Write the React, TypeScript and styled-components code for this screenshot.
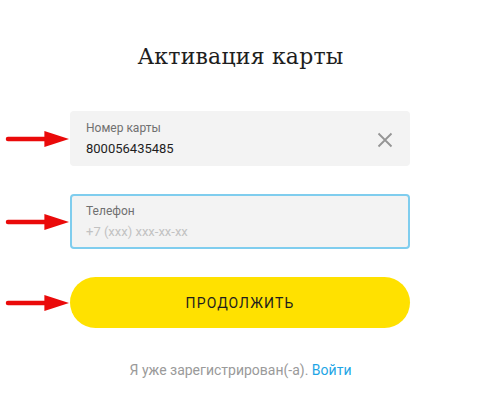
import React from "react";
import styled, { createGlobalStyle } from "styled-components";

const Global = createGlobalStyle`
  html, body { margin: 0; padding: 0; background: #ffffff; }
  body { font-family: Roboto, "Noto Sans", Arial, sans-serif; }
`;

const Page = styled.div`
  width: 481px;
  height: 417px;
  display: flex;
  flex-direction: column;
  align-items: center;
  box-sizing: border-box;
  padding-top: 42px;
`;

const Title = styled.h1`
  margin: 0;
  font-family: "DejaVu Serif", "Liberation Serif", serif;
  font-weight: 400;
  font-size: 22px;
  line-height: 30px;
  color: #1e1e1e;
  letter-spacing: 0.2px;
`;

const Row = styled.div<{ $top: number }>`
  display: grid;
  grid-template-columns: 70px 340px;
  width: 481px;
  margin-top: ${(p) => p.$top}px;
  align-items: center;
`;

const ArrowCell = styled.div`
  display: flex;
  align-items: center;
  justify-content: flex-start;
  padding-left: 5px;
  height: 100%;
`;

const Field = styled.div<{ $focused?: boolean }>`
  position: relative;
  box-sizing: border-box;
  height: 55px;
  background: #f3f3f3;
  border-radius: 4px;
  border: 2px solid ${(p) => (p.$focused ? "#7fcdee" : "transparent")};
  padding: 7px 14px 0 14px;
  display: flex;
  flex-direction: column;
`;

const Label = styled.div`
  font-size: 12px;
  line-height: 16px;
  color: #707070;
`;

const Value = styled.div<{ $placeholder?: boolean }>`
  margin-top: 4px;
  font-size: 13px;
  line-height: 18px;
  color: ${(p) => (p.$placeholder ? "#c2c2c2" : "#1e1e1e")};
`;

const Clear = styled.button`
  position: absolute;
  right: 14px;
  top: 18px;
  width: 18px;
  height: 18px;
  padding: 0;
  border: 0;
  background: transparent;
  display: flex;
  align-items: center;
  justify-content: center;
`;

const Button = styled.button`
  box-sizing: border-box;
  height: 51px;
  border: 0;
  border-radius: 26px;
  background: #ffe100;
  font-family: Roboto, "Noto Sans", Arial, sans-serif;
  font-size: 14px;
  letter-spacing: 1.1px;
  color: #1e1e1e;
  cursor: pointer;
`;

const Footer = styled.div`
  margin-top: 33px;
  font-size: 14px;
  line-height: 18px;
  color: #9a9a9a;
`;

const Link = styled.a`
  color: #1ea5e5;
  text-decoration: none;
`;

const Arrow = () => (
  <svg width="66" height="18" viewBox="0 0 66 18">
    <path d="M3 9 L42 9" stroke="#ea0a0a" strokeWidth="4.5" strokeLinecap="round" />
    <path d="M40 1 L65 9 L40 17 Z" fill="#ea0a0a" />
  </svg>
);

export default function App() {
  return (
    <>
      <Global />
      <Page>
        <Title>Активация карты</Title>
        <Row $top={39}>
          <ArrowCell>
            <Arrow />
          </ArrowCell>
          <Field>
            <Label>Номер карты</Label>
            <Value>800056435485</Value>
            <Clear aria-label="clear">
              <svg width="16" height="16" viewBox="0 0 16 16">
                <path d="M1.5 1.5 L14.5 14.5 M14.5 1.5 L1.5 14.5" stroke="#959595" strokeWidth="1.8" />
              </svg>
            </Clear>
          </Field>
        </Row>
        <Row $top={28}>
          <ArrowCell>
            <Arrow />
          </ArrowCell>
          <Field $focused>
            <Label>Телефон</Label>
            <Value $placeholder>+7 (xxx) xxx-xx-xx</Value>
          </Field>
        </Row>
        <Row $top={28}>
          <ArrowCell>
            <Arrow />
          </ArrowCell>
          <Button>ПРОДОЛЖИТЬ</Button>
        </Row>
        <Footer>
          Я уже зарегистрирован(-а). <Link href="#">Войти</Link>
        </Footer>
      </Page>
    </>
  );
}
